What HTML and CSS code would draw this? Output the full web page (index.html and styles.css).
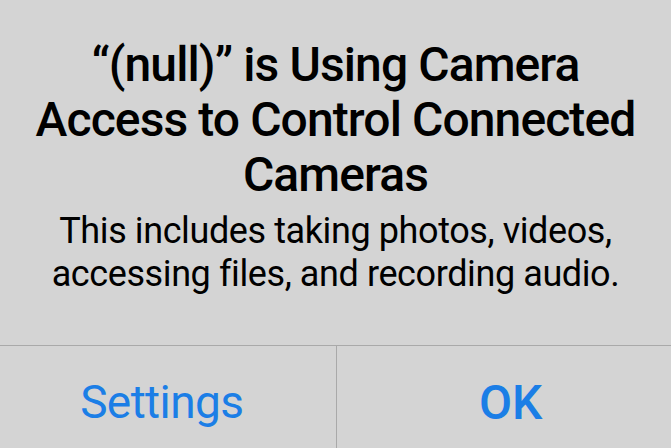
FILE: index.html
```html
<!DOCTYPE html>
<html>
<head>
<meta charset="utf-8">
<link rel="stylesheet" href="styles.css">
</head>
<body>
<div class="alert">
  <div class="content">
    <h1 class="title">“(null)” is Using Camera Access to Control Connected Cameras</h1>
    <p class="message">This includes taking photos, videos, accessing files, and recording audio.</p>
  </div>
  <div class="actions">
    <div class="btn btn-left">Settings</div>
    <div class="btn btn-right btn-bold">OK</div>
  </div>
</div>
</body>
</html>
```

FILE: styles.css
```css
html, body {
  margin: 0;
  padding: 0;
  height: 100%;
  overflow: hidden;
  background: #d4d4d4;
}
.alert {
  font-family: Roboto, "Liberation Sans", sans-serif;
  color: #000;
  display: flex;
  flex-direction: column;
}
.content {
  padding: 37px 20px 49px;
  text-align: center;
  border-bottom: 1px solid #a9a9a9;
}
.title {
  margin: 0 auto;
  font-size: 48px;
  font-weight: 500;
  letter-spacing: -0.9px;
  line-height: 55px;
  max-width: 610px;
}
.message {
  margin: 8px 0 0;
  font-size: 36px;
  letter-spacing: -0.4px;
  line-height: 43px;
  font-weight: 400;
}
.actions {
  display: grid;
  grid-template-columns: 1fr 1fr;
  height: 112px;
}
.btn {
  display: flex;
  align-items: center;
  justify-content: center;
  color: #1b7ee6;
  font-size: 46px;
  letter-spacing: -0.6px;
}
.btn-left {
  padding-right: 12px;
}
.btn-right {
  padding-left: 14px;
  border-left: 1px solid #a9a9a9;
}
.btn-bold {
  font-weight: 500;
  font-size: 48px;
  letter-spacing: 0;
}
```
